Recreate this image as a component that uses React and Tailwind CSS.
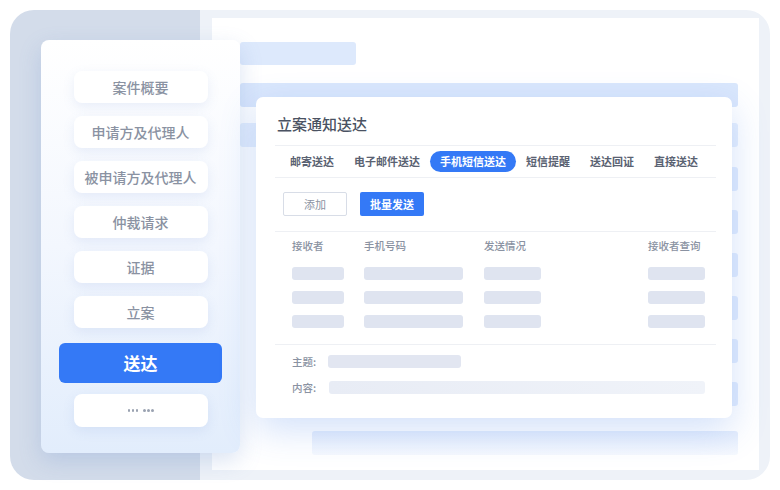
import React from 'react'

const menu = ['案件概要', '申请方及代理人', '被申请方及代理人', '仲裁请求', '证据', '立案']
const tabs = ['邮寄送达', '电子邮件送达', '手机短信送达', '短信提醒', '送达回证', '直接送达']
const cols = [
  { label: '接收者', w: 'w-[72px]', bar: 'w-[52px]' },
  { label: '手机号码', w: 'w-[120px]', bar: 'w-[99px]' },
  { label: '发送情况', w: 'w-[164px]', bar: 'w-[57px]' },
  { label: '接收者查询', w: 'w-[68px]', bar: 'w-[57px]' },
]

function Dots() {
  return (
    <div className="flex items-center gap-[5px]">
      {[0, 1].map(g => (
        <div key={g} className="flex gap-[1.5px]">
          {[0, 1, 2].map(i => <span key={i} className="w-[2.5px] h-[2.5px] rounded-full bg-[#9aa2b1]" />)}
        </div>
      ))}
    </div>
  )
}

function Sidebar() {
  return (
    <div className="absolute left-[41px] top-[40px] w-[199px] h-[413px] rounded-[8px] bg-gradient-to-b from-white via-[#f3f7fe] to-[#e2edfc] shadow-[0_8px_22px_rgba(90,130,200,0.22)] flex flex-col items-center pt-[31px] gap-[13px]">
      {menu.map(m => (
        <div key={m} className="w-[134px] h-[32px] rounded-[8px] bg-white shadow-[0_4px_12px_rgba(120,150,210,0.14)] flex items-center justify-center text-[14px] text-[#8a92a2] font-medium">
          {m}
        </div>
      ))}
      <div className="w-[163px] h-[40px] mt-[2px] rounded-[6px] bg-[#3479f6] flex items-center justify-center text-[17px] font-bold text-white">
        送达
      </div>
      <div className="w-[134px] h-[33px] -mt-[2px] rounded-[8px] bg-white shadow-[0_4px_12px_rgba(120,150,210,0.14)] flex items-center justify-center">
        <Dots />
      </div>
    </div>
  )
}

function Card() {
  return (
    <div className="absolute left-[256px] top-[97px] w-[476px] h-[321px] rounded-[7px] bg-white shadow-[0_12px_36px_rgba(70,130,235,0.24)] pl-[19px] pr-[16px]">
      <div className="pt-[16px] pb-[11px] pl-[2px] text-[15px] leading-[21px] font-medium text-[#4a5262]">立案通知送达</div>
      <div className="h-[33px] border-y border-[#eef0f4] flex items-center pl-[5px]">
        {tabs.map((t, i) => (
          <div
            key={t}
            className={
              i === 2
                ? 'h-[21px] px-[10px] rounded-full bg-[#3479f6] text-white flex items-center text-[11px] font-bold'
                : 'px-[10px] text-[11px] font-bold text-[#5a6272]'
            }
          >
            {t}
          </div>
        ))}
      </div>
      <div className="flex gap-[13px] pl-[8px] pt-[14px] pb-[15px] border-b border-[#eef0f4]">
        <div className="w-[64px] h-[24px] rounded-[2px] border border-[#d8dde7] flex items-center justify-center text-[11px] text-[#8a92a2]">添加</div>
        <div className="w-[64px] h-[24px] rounded-[2px] bg-[#3479f6] flex items-center justify-center text-[11px] font-bold text-white">批量发送</div>
      </div>
      <div className="pl-[17px] pt-[7px] pb-[16px] border-b border-[#eef0f4]">
        <div className="flex text-[10.5px] leading-[14px] text-[#8a92a2] font-medium">
          {cols.map(c => <div key={c.label} className={`${c.w} shrink-0`}>{c.label}</div>)}
        </div>
        <div className="flex flex-col gap-[11px] mt-[14px]">
          {[0, 1, 2].map(r => (
            <div key={r} className="flex h-[13px]">
              {cols.map(c => (
                <div key={c.label} className={`${c.w} shrink-0`}>
                  <div className={`${c.bar} h-[13px] rounded-[3px] bg-[#dfe4f0]`} />
                </div>
              ))}
            </div>
          ))}
        </div>
      </div>
      <div className="pl-[17px] pt-[10px] flex flex-col gap-[13px] text-[10.5px] text-[#8a92a2] font-medium">
        <div className="flex items-center h-[13px]">
          <span className="w-[36px]">主题:</span>
          <div className="w-[133px] h-[13px] rounded-[3px] bg-[#e2e6f1]" />
        </div>
        <div className="flex items-center h-[13px]">
          <span className="w-[37px]">内容:</span>
          <div className="w-[376px] h-[13px] rounded-[3px] bg-gradient-to-r from-[#e8ecf5] to-[#f0f3f9]" />
        </div>
      </div>
    </div>
  )
}

export default function App() {
  return (
    <div className="relative w-[780px] h-[490px] bg-white p-[10px]" style={{ fontFamily: '"Noto Sans CJK SC", "Noto Sans", sans-serif' }}>
      <div className="flex h-[470px]">
        <div className="w-[190px] bg-[#d3dcea] rounded-l-[24px]" />
        <div className="flex-1 bg-[#eef2f8] rounded-r-[24px] pt-[8px] pl-[12px] pr-[11px] pb-[10px]">
          <div className="h-full bg-white pl-[28px] pr-[21px] pt-[24px] flex flex-col">
            <div className="w-[116px] h-[23px] rounded-[3px] bg-[#dde9fc]" />
            <div className="h-[24px] mt-[18px] rounded-[3px] bg-[#dae7fc]" />
            <div className="h-[24px] mt-[16px] rounded-[3px] bg-[#e6effd]" />
            <div className="flex flex-col gap-[19px] mt-[20px] ml-[16px]">
              {[0, 1, 2, 3, 4, 5].map(i => (
                <div key={i} className="h-[24px] rounded-[3px] bg-[#e2ecfd]" />
              ))}
            </div>
            <div className="ml-[72px] h-[24px] mt-[25px] rounded-[3px] bg-gradient-to-b from-[#e4edfc] to-[#f6f9fe]" />
          </div>
        </div>
      </div>
      <Sidebar />
      <Card />
    </div>
  )
}
